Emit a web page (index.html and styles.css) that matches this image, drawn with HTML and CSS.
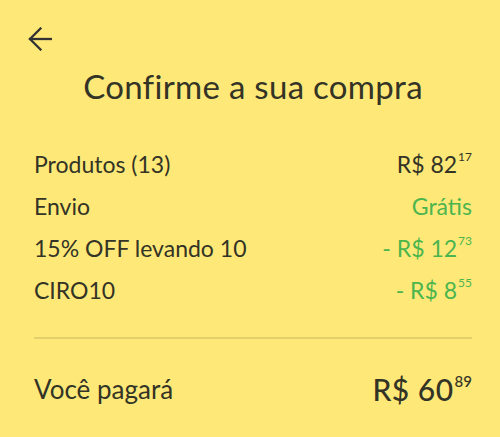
FILE: index.html
```html
<!DOCTYPE html>
<html lang="pt-BR">
<head>
<meta charset="utf-8">
<link rel="stylesheet" href="styles.css">
</head>
<body>
<div class="page">
  <header class="top">
    <button class="back" aria-label="Voltar">
      <svg width="24" height="24" viewBox="0 0 24 24" fill="none" stroke="#333" stroke-width="2.3" stroke-linecap="square">
        <path d="M2 12H23"/>
        <path d="M12.5 1.5L2 12L12.5 22.5"/>
      </svg>
    </button>
  </header>
  <h1 class="title">Confirme a sua compra</h1>
  <div class="rows">
    <div class="row"><span>Produtos (13)</span><span class="price">R$ 82<sup>17</sup></span></div>
    <div class="row"><span>Envio</span><span class="green">Grátis</span></div>
    <div class="row"><span>15% OFF levando 10</span><span class="price green">- R$ 12<sup>73</sup></span></div>
    <div class="row"><span>CIRO10</span><span class="price green">- R$ 8<sup>55</sup></span></div>
  </div>
  <div class="total">
    <span>Você pagará</span><span class="price big">R$ 60<sup>89</sup></span>
  </div>
</div>
</body>
</html>
```
FILE: styles.css
```css
html, body {
  margin: 0;
  background: #fee978;
}
body {
  font-family: Lato, "Open Sans", sans-serif;
  color: #333326;
}
.page {
  padding: 27px 28px 0 34px;
}
.top {
  display: flex;
  height: 24px;
}
.back {
  border: 0;
  background: none;
  padding: 0;
  margin-left: -6px;
  width: 24px;
  height: 24px;
}
.title {
  margin: 15px 0 0;
  text-align: center;
  font-weight: 400;
  font-size: 33px;
  line-height: 40px;
  letter-spacing: 0.3px;
}
.rows {
  margin-top: 37px;
  padding-bottom: 26px;
  border-bottom: 2px solid #e3d06c;
}
.row {
  display: flex;
  justify-content: space-between;
  font-size: 23px;
  line-height: 42px;
}
.green {
  color: #4cb54e;
}
.price sup {
  font-size: 12px;
  vertical-align: top;
  line-height: 1;
  position: relative;
  top: 8px;
  margin-left: 1px;
}
.total {
  display: flex;
  justify-content: space-between;
  font-size: 26px;
  line-height: 40px;
  margin-top: 30px;
}
.big {
  font-weight: 500;
  font-size: 30px;
  letter-spacing: 0.5px;
}
.big sup {
  font-size: 15px;
  top: 5px;
  letter-spacing: 0;
}
```
